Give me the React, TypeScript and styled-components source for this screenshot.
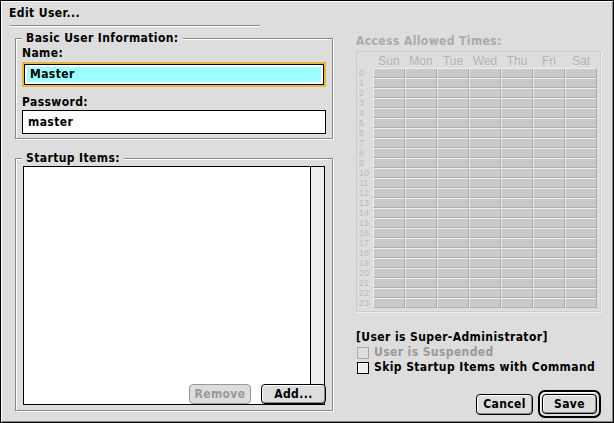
import styled, { createGlobalStyle } from 'styled-components';

const Global = createGlobalStyle`
  body { margin: 0; background: #ddd; }
  * { box-sizing: border-box; }
`;

const days = ['Sun', 'Mon', 'Tue', 'Wed', 'Thu', 'Fri', 'Sat'];
const hours = Array.from({ length: 24 }, (_, i) => i);

const App = () => {
  return (
    <>
      <Global />
      <Window>
        <Title>Edit User...</Title>
        <Rule />
        <Columns>
          <Left>
            <Group $h={101}>
              <Legend>Basic User Information:</Legend>
              <FieldLabel>Name:</FieldLabel>
              <Focus>
                <Field $selected>Master</Field>
              </Focus>
              <FieldLabel style={{ marginTop: 7 }}>Password:</FieldLabel>
              <Field>master</Field>
            </Group>
            <Group $h={253}>
              <Legend>Startup Items:</Legend>
              <List>
                <ListBody />
                <Scroll />
              </List>
              <ButtonRow>
                <Button $disabled $w={62}>Remove</Button>
                <Button $w={65}>Add...</Button>
              </ButtonRow>
            </Group>
          </Left>
          <Right>
            <GreyTitle>Access Allowed Times:</GreyTitle>
            <Grid>
              <HeadRow>
                <HourCell />
                {days.map((d) => (
                  <DayHead key={d}>{d}</DayHead>
                ))}
              </HeadRow>
              {hours.map((h) => (
                <HourRow key={h}>
                  <HourCell>{h}</HourCell>
                  {days.map((d) => (
                    <Slot key={d} />
                  ))}
                </HourRow>
              ))}
            </Grid>
            <Status>[User is Super-Administrator]</Status>
            <Check $disabled>
              <Box $disabled />
              User is Suspended
            </Check>
            <Check>
              <Box />
              Skip Startup Items with Command
            </Check>
            <Footer>
              <Button $w={57} $h={21}>Cancel</Button>
              <DefaultRing>
                <Button $w={55} $h={20}>Save</Button>
              </DefaultRing>
            </Footer>
          </Right>
        </Columns>
      </Window>
    </>
  );
};

export default App;

const font = `
  font-family: "DejaVu Sans Condensed", "DejaVu Sans", sans-serif;
  font-weight: bold;
  font-size: 12px;
  letter-spacing: 0.4px;
  white-space: nowrap;
`;

const Window = styled.div`
  width: 614px;
  height: 423px;
  border: 1px solid #000;
  box-shadow: inset 1px 1px 0 #fff, inset -1px -1px 0 #888;
  background: #ddd;
  padding: 5px 8px 0 8px;
  ${font}
  color: #000;
  overflow: hidden;
`;

const Title = styled.div`
  height: 16px;
`;

const Rule = styled.div`
  width: 250px;
  height: 2px;
  border-top: 1px solid #888;
  border-bottom: 1px solid #fff;
  margin: 3px 0 0 1px;
`;

const Columns = styled.div`
  display: flex;
  gap: 23px;
  margin-top: 4px;
`;

const Left = styled.div`
  width: 324px;
  display: flex;
  flex-direction: column;
  gap: 12px;
  padding-left: 6px;
`;

const Group = styled.div<{ $h: number }>`
  position: relative;
  height: ${(p) => p.$h}px;
  border: 1px solid #888;
  box-shadow: 1px 1px 0 #fff, inset 1px 1px 0 #fff;
  margin-top: 7px;
  padding: 5px 6px 0 6px;
  display: flex;
  flex-direction: column;
`;

const Legend = styled.div`
  position: absolute;
  top: -9px;
  left: 6px;
  background: #ddd;
  padding: 0 4px;
  line-height: 16px;
`;

const FieldLabel = styled.div`
  line-height: 16px;
  margin-top: 1px;
`;

const Focus = styled.div`
  margin-top: 1px;
  border: 2px solid #e8b830;
`;

const Field = styled.div<{ $selected?: boolean }>`
  height: ${(p) => (p.$selected ? '21px' : '24px')};
  border: 1px solid #000;
  background: #fff;
  padding: ${(p) => (p.$selected ? '1px 5px' : '3px 5px')};
  line-height: 16px;
  box-shadow: ${(p) =>
    p.$selected ? 'inset 0 0 0 2px #fff, inset 0 0 0 20px #99ffff' : 'none'};
`;

const List = styled.div`
  display: flex;
  height: 239px;
  border: 1px solid #000;
  margin: 2px 1px 0 1px;
`;

const ListBody = styled.div`
  flex: 1;
  background: #fff;
`;

const Scroll = styled.div`
  width: 14px;
  background: #eee;
  border-left: 1px solid #000;
`;

const ButtonRow = styled.div`
  position: absolute;
  right: 6px;
  bottom: 6px;
  display: flex;
  gap: 10px;
`;

const Button = styled.div<{ $disabled?: boolean; $w: number; $h?: number }>`
  width: ${(p) => p.$w}px;
  height: ${(p) => p.$h ?? 20}px;
  border: 1px solid ${(p) => (p.$disabled ? '#999' : '#000')};
  border-radius: 4px;
  background: #ddd;
  box-shadow: ${(p) =>
    p.$disabled ? 'none' : 'inset 1px 1px 0 #fff, inset -1px -1px 0 #888'};
  color: ${(p) => (p.$disabled ? '#999' : '#000')};
  display: flex;
  align-items: center;
  justify-content: center;
`;

const Right = styled.div`
  width: 245px;
  display: flex;
  flex-direction: column;
`;

const GreyTitle = styled.div`
  color: #aaa;
  line-height: 16px;
  margin-top: 2px;
`;

const Grid = styled.div`
  margin-top: 2px;
  height: 261px;
  border: 1px solid #ccc;
  box-shadow: 1px 1px 0 #eee;
  padding: 1px 1px 0 1px;
  font-family: "Liberation Sans", Arial, sans-serif;
  font-weight: normal;
  letter-spacing: 0;
`;

const HeadRow = styled.div`
  display: flex;
  height: 15px;
  align-items: center;
`;

const DayHead = styled.div`
  width: 32px;
  text-align: center;
  color: #b4b4b4;
  font-size: 12px;
`;

const HourRow = styled.div`
  display: flex;
  height: 10px;
`;

const HourCell = styled.div`
  width: 15px;
  font-size: 9px;
  line-height: 10px;
  color: #bbb;
  padding-left: 1px;
`;

const Slot = styled.div`
  width: 32px;
  height: 10px;
  background: #c9c9c9;
  border-left: 1px solid #eee;
  border-right: 1px solid #aaa;
  border-top: 1px solid #eee;
  border-bottom: 1px solid #b0b0b0;
`;

const Status = styled.div`
  margin-top: 17px;
  line-height: 16px;
`;

const Check = styled.div<{ $disabled?: boolean }>`
  display: flex;
  align-items: center;
  gap: 5px;
  line-height: 15px;
  margin-left: 1px;
  color: ${(p) => (p.$disabled ? '#999' : '#000')};
`;

const Box = styled.div<{ $disabled?: boolean }>`
  width: 12px;
  height: 12px;
  border: 1px solid ${(p) => (p.$disabled ? '#aaa' : '#000')};
  background: ${(p) => (p.$disabled ? '#ddd' : '#eee')};
  box-shadow: ${(p) => (p.$disabled ? 'none' : 'inset 1px 1px 0 #fff')};
`;

const Footer = styled.div`
  display: flex;
  justify-content: flex-end;
  align-items: center;
  gap: 5px;
  margin-top: 15px;
  padding-right: 0;
`;

const DefaultRing = styled.div`
  border: 2px solid #000;
  border-radius: 7px;
  padding: 2px;
  background: #ddd;
  box-shadow: inset 1px 1px 0 #fff;
`;
